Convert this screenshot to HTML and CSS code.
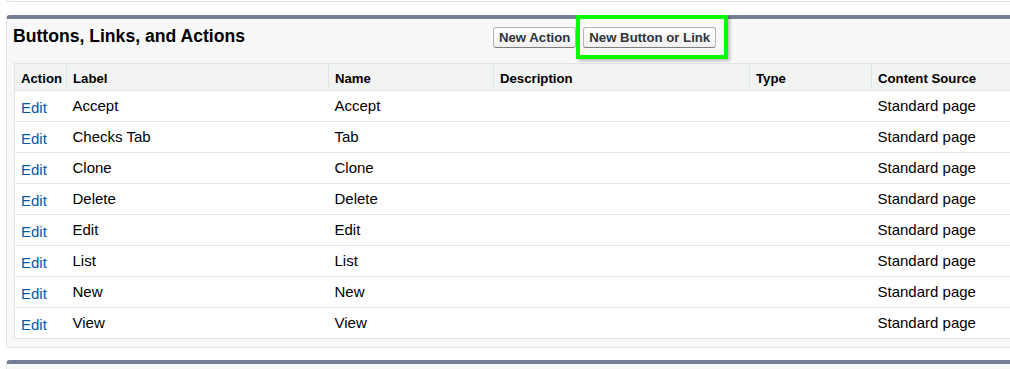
FILE: index.html
```html
<!DOCTYPE html>
<html lang="en">
<head>
  <meta charset="UTF-8" />
  <title>Buttons, Links, and Actions</title>
  <link rel="stylesheet" href="styles.css">
</head>
<body>

  <div class="page">
    <div class="panel panel-prev"></div>

    <div class="panel">
      <div class="panel-head">
        <h2>Buttons, Links, and Actions</h2>
        <div class="actions">
          <button class="btn">New Action</button>
          <span class="highlight">
            <button class="btn">New Button or Link</button>
          </span>
        </div>
      </div>

      <table class="list">
        <thead>
          <tr>
            <th class="col-action">Action</th>
            <th class="col-label">Label</th>
            <th class="col-name">Name</th>
            <th class="col-desc">Description</th>
            <th class="col-type">Type</th>
            <th class="col-source">Content Source</th>
          </tr>
        </thead>
        <tbody id="rows"></tbody>
      </table>
    </div>

    <div class="panel panel-next"></div>
  </div>

  <script>
    // Standard buttons list
    const buttons = [
      ['Accept', 'Accept'],
      ['Checks Tab', 'Tab'],
      ['Clone', 'Clone'],
      ['Delete', 'Delete'],
      ['Edit', 'Edit'],
      ['List', 'List'],
      ['New', 'New'],
      ['View', 'View']
    ];

    const body = document.getElementById('rows');
    buttons.forEach(([label, name]) => {
      const tr = document.createElement('tr');
      tr.innerHTML =
        '<td class="action"><a href="#">Edit</a></td>' +
        '<td>' + label + '</td>' +
        '<td>' + name + '</td>' +
        '<td></td><td></td>' +
        '<td>Standard page</td>';
      body.appendChild(tr);
    });
  </script>
</body>
</html>
```

FILE: styles.css
```css
:root {
  --bar: #747e96;
  --panel-bg: #f8f8f8;
  --panel-border: #e3e3e3;
  --grid: #e3e6e8;
  --head-bg: #f2f3f3;
  --link: #015ba7;
}

* {
  box-sizing: border-box;
}

html, body {
  overflow: hidden;
}

body {
  margin: 0;
  background: #fff;
  font-family: 'Liberation Sans', Arial, sans-serif;
  color: #000;
}

.page {
  width: 1040px;
  padding-left: 6px;
}

.panel {
  background: var(--panel-bg);
  border: 1px solid var(--panel-border);
  border-top: 4px solid var(--bar);
  border-radius: 4px;
  padding: 0 0 8px 7px;
}

.panel-prev {
  height: 12px;
  margin-top: -10px;
  margin-bottom: 13px;
  background: #fff;
  border-top: none;
  padding: 0;
}

.panel-next {
  margin-top: 12px;
  height: 20px;
}

.panel-head {
  display: flex;
  align-items: flex-start;
  height: 44px;
}

.panel-head h2 {
  width: 480px;
  margin: 0 0 0 -1px;
  padding: 6px 0 0 0;
  font-size: 17.6px;
  font-weight: bold;
  line-height: 22px;
}

.actions {
  display: flex;
  gap: 7px;
  padding-top: 8px;
}

.btn {
  height: 21px;
  padding: 0 5px;
  font-family: inherit;
  font-size: 13.2px;
  font-weight: bold;
  color: #333;
  background: linear-gradient(#ffffff, #f0f0f0);
  border: 1px solid #b5b5b5;
  border-bottom-color: #7f7f7f;
  border-radius: 3px;
  cursor: pointer;
}

.highlight {
  position: relative;
  display: inline-block;
}

.highlight::after {
  content: '';
  position: absolute;
  top: -12px;
  left: -7px;
  right: -12px;
  bottom: -11px;
  border: 4px solid #0f0;
  box-shadow: 2px 2px 3px rgba(0, 0, 0, 0.25);
  pointer-events: none;
}

.list {
  width: 1040px;
  border-collapse: collapse;
  background: #fff;
  border: 1px solid var(--grid);
}

.list th {
  height: 27px;
  padding: 2px 6px 0;
  background: var(--head-bg);
  border: 1px solid var(--grid);
  font-size: 13.2px;
  font-weight: bold;
  text-align: left;
  white-space: nowrap;
}

.list th.col-action {
  padding-right: 3px;
}

.list td {
  height: 31px;
  padding: 0 6px 2px;
  border-bottom: 1px solid var(--grid);
  font-size: 15px;
}

.list td.action {
  padding: 3px 3px 0 6px;
}

.list a {
  color: var(--link);
  text-decoration: none;
}

.col-action { width: 52px; }
.col-label { width: 262px; }
.col-name { width: 165px; }
.col-desc { width: 256px; }
.col-type { width: 122px; }
```
